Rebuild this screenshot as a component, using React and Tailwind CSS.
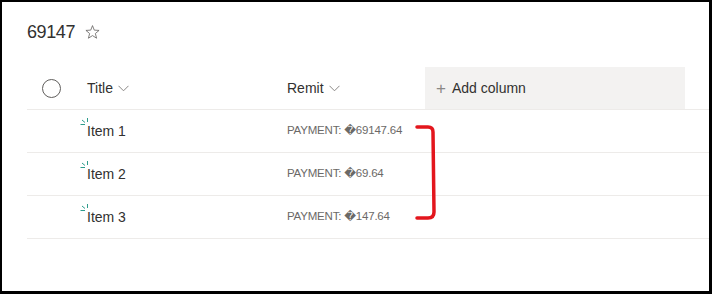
import React from 'react';

const items = [
  { id: 1, title: 'Item 1', remit: 'PAYMENT: \uFFFD69147.64' },
  { id: 2, title: 'Item 2', remit: 'PAYMENT: \uFFFD69.64' },
  { id: 3, title: 'Item 3', remit: 'PAYMENT: \uFFFD147.64' },
];

const Chevron = () => (
  <svg width="11" height="7" viewBox="0 0 11 7" className="ml-[5px] mt-[1px]">
    <polyline points="0.5,0.8 5.5,5.8 10.5,0.8" fill="none" stroke="#8a8886" strokeWidth="1" />
  </svg>
);

const NewMark = () => (
  <svg width="9" height="8" viewBox="0 0 9 8" className="absolute left-[-7px] top-[-3px]">
    <line x1="0.5" y1="6.5" x2="5" y2="6.5" stroke="#2e9c8c" strokeWidth="1" />
    <line x1="2" y1="2" x2="5" y2="4.5" stroke="#2e9c8c" strokeWidth="1" />
    <line x1="7.5" y1="0" x2="7.5" y2="4" stroke="#2e9c8c" strokeWidth="1" />
  </svg>
);

export default function App() {
  return (
    <div
      className="relative w-[712px] h-[294px] bg-white border-t-2 border-l-2 border-r-[3px] border-b-[3px] border-black overflow-hidden"
      style={{ fontFamily: '"Liberation Sans", "DejaVu Sans", sans-serif' }}
    >
      <div className="h-[61px] pl-[25px] flex items-center">
        <span className="text-[18px] tracking-[-0.4px] text-[#323130]">69147</span>
        <svg width="15" height="14" viewBox="0 0 24 23" className="ml-[10px] mt-[-1px]">
          <polygon
            points="12,1 14.9,8.4 22.8,8.9 16.7,14 18.7,21.7 12,17.4 5.3,21.7 7.3,14 1.2,8.9 9.1,8.4"
            fill="none"
            stroke="#605e5c"
            strokeWidth="1.3"
            strokeLinejoin="round"
          />
        </svg>
      </div>

      <div className="mt-[4px] ml-[25px]">
        <div className="flex h-[43px] border-b border-[#edebe9] text-[14px] text-[#323130]">
          <div className="w-[50px] flex items-center justify-center">
            <div className="w-[19px] h-[19px] rounded-full border border-[#605e5c] ml-[-2px]" />
          </div>
          <div className="w-[200px] pl-[10px] flex items-center">
            Title
            <Chevron />
          </div>
          <div className="w-[148px] pl-[10px] flex items-center">
            Remit
            <Chevron />
          </div>
          <div className="w-[260px] h-[42px] bg-[#f3f2f1] pl-[11px] flex items-center text-[#323130]">
            <span className="text-[17px] font-light text-[#8a8886] mr-[6px] leading-none">+</span>
            Add column
          </div>
        </div>

        {items.map((item) => (
          <div key={item.id} className="flex h-[43px] border-b border-[#edebe9]">
            <div className="w-[50px]" />
            <div className="w-[200px] pl-[10px] flex items-center text-[14px] text-[#323130]">
              <span className="relative">
                <NewMark />
                {item.title}
              </span>
            </div>
            <div className="w-[148px] pl-[10px] flex items-center text-[11.5px] tracking-[-0.2px] text-[#6b6967] whitespace-nowrap">
              {item.remit}
            </div>
          </div>
        ))}
      </div>

      <svg
        width="30"
        height="100"
        viewBox="0 0 30 100"
        className="absolute left-[411px] top-[121px]"
      >
        <path
          d="M4 4 L15 4 Q20 4 20 9 L21 89 Q21 95 15 95 L4 95"
          fill="none"
          stroke="#e3161d"
          strokeWidth="3.5"
          strokeLinecap="round"
          strokeLinejoin="round"
        />
      </svg>
    </div>
  );
}
